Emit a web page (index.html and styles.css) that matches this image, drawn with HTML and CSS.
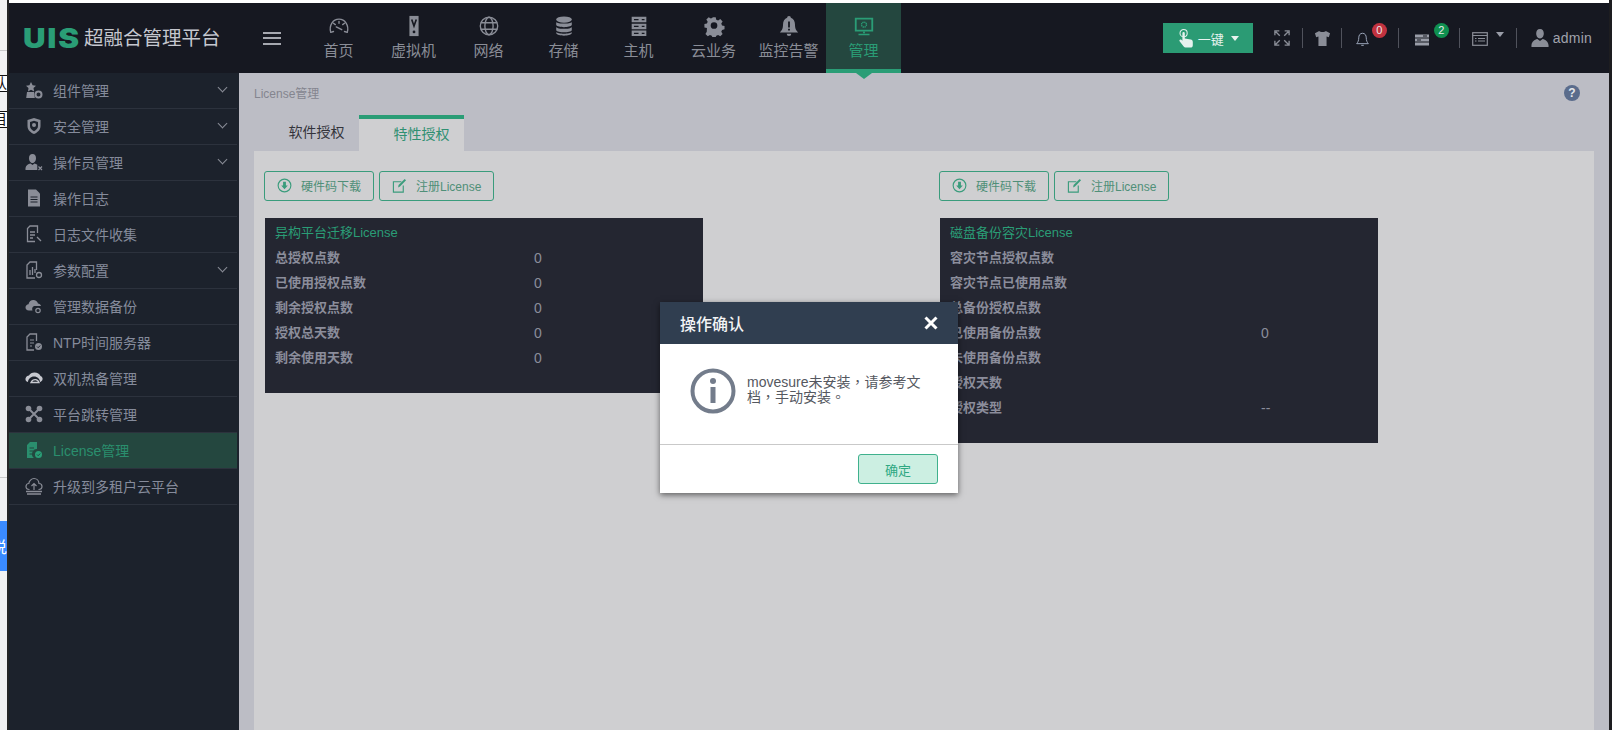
FILE: index.html
```html
<!DOCTYPE html>
<html lang="zh-CN">
<head>
<meta charset="utf-8">
<title>License管理</title>
<link rel="stylesheet" href="styles.css">
</head>
<body>
<div class="screen">
  <div class="strip">
    <div class="frag-line frag-line-a"></div>
    <div class="frag frag-a"><span>认</span></div>
    <div class="frag frag-b"><span>目</span></div>
    <div class="frag-line frag-line-b"></div>
    <div class="frag-blue"><span>说</span></div>
  </div>
  <div class="frame">
    <header class="topbar">
      <div class="brand"><span class="brand-mark">UIS</span><span class="brand-name">超融合管理平台</span></div>
      <button class="burger" aria-label="menu"><i></i><i></i><i></i></button>
      <nav class="nav">
        <a class="nav-item"><svg class="nav-ico" viewBox="0 0 24 24" fill="none" stroke="currentColor" stroke-width="1.5"><path d="M3 19C.8 11 5.5 4.5 12 4.5S23.2 11 21 19"/><path d="M3 19l3-1M21 19l-3-1M6 9l2 1.500M18 9l-2 1.500M12 7v2M9 13l6 3" stroke-linecap="round"/></svg><span>首页</span></a>
        <a class="nav-item"><svg class="nav-ico" viewBox="0 0 24 24"><path fill="currentColor" d="M7 1h10v22H7z"/><path fill="none" stroke="#161821" stroke-width="1.800" d="M9.500 5l2.500 7 2.500-7"/><circle cx="12" cy="18.500" r="1.500" fill="#161821"/></svg><span>虚拟机</span></a>
        <a class="nav-item"><svg class="nav-ico" viewBox="0 0 24 24" fill="none" stroke="currentColor" stroke-width="1.500"><circle cx="12" cy="12" r="9.500"/><ellipse cx="12" cy="12" rx="4.500" ry="9.500"/><path d="M3 8.500h18M3 15.500h18"/></svg><span>网络</span></a>
        <a class="nav-item"><svg class="nav-ico" viewBox="0 0 24 24" fill="currentColor"><ellipse cx="12" cy="5" rx="8.500" ry="3.500"/><path d="M3.500 7.500C5 10 19 10 20.500 7.500V11C19 14 5 14 3.500 11zM3.500 13C5 15.800 19 15.800 20.500 13v3.500C19 19.500 5 19.500 3.500 16.500zM3.500 18.500C5 21 19 21 20.500 18.500V20C19 23.500 5 23.500 3.500 20z"/></svg><span>存储</span></a>
        <a class="nav-item"><svg class="nav-ico" viewBox="0 0 24 24"><path fill="currentColor" d="M4 2h16v6H4zM4 9.500h16v6H4zM4 17h16v6H4z"/><path stroke="#161821" stroke-width="1.400" d="M6.500 5h5M6.500 12.500h5M6.500 20h5M15 5h3M15 12.500h3M15 20h3"/></svg><span>主机</span></a>
        <a class="nav-item"><svg class="nav-ico" viewBox="0 0 24 24"><path fill="currentColor" fill-rule="evenodd" d="M10 2h4l.7 3 2.200.9 2.600-1.600 2.800 2.800-1.600 2.600.9 2.200 3 .7v4l-3 .7-.9 2.200 1.600 2.600-2.800 2.800-2.600-1.600-2.200.9-.7 1.800h-4l-.7-1.800-2.200-.9-2.600 1.600-2.800-2.800 1.600-2.600L3.500 15l-3-.7v-4l3-.7.9-2.200-1.600-2.600 2.800-2.800 2.600 1.600 2.200-.9zM12 8a4 4 0 1 0 0 8 4 4 0 0 0 0-8z" transform="translate(1.100 .5) scale(.91)"/></svg><span>云业务</span></a>
        <a class="nav-item"><svg class="nav-ico" viewBox="0 0 24 24"><path fill="currentColor" d="M12 1c1.500 0 2 1 2 2 3 1 4.500 4 4.500 7 0 5 1.500 7 3.500 9H2c2-2 3.500-4 3.500-9 0-3 1.500-6 4.500-7 0-1 .5-2 2-2zM9.500 20.500h5a2.500 2.500 0 0 1-5 0z"/><path fill="#161821" d="M11 7h2v6.500h-2zM11 15h2v2h-2z"/></svg><span>监控告警</span></a>
        <a class="nav-item nav-active"><svg class="nav-ico" viewBox="0 0 24 24"><path fill="currentColor" fill-rule="evenodd" d="M2 3h20v15H2zM4 5v11h16V5z"/><path fill="currentColor" d="M11 18h2v2h-2zM6 20.500h12V22H6z"/><circle cx="12" cy="10.500" r="2.700" fill="none" stroke="currentColor" stroke-width="1.500" stroke-dasharray="1.500 .6"/></svg><span>管理</span></a>
      </nav>
      <div class="tools">
        <button class="one-key">
          <svg class="hand" viewBox="0 0 20 24"><circle cx="7" cy="6" r="4.500" fill="none" stroke="#e6f2ee" stroke-width="1.300"/><path fill="#e6f2ee" d="M5.500 6a1.500 1.500 0 0 1 3 0v6.500l7.500 1.500c1.500.3 2.500 1.200 2.500 3V21c0 1.500-1 3-3 3H9.500c-1 0-1.800-.5-2.400-1.300L2 16c-1-1.500.8-3 2.200-1.800L5.500 15.500z"/></svg>
          <span>一键</span><i class="caret caret-light"></i>
        </button>
        <span class="tool tool-full"><svg class="ico-full" viewBox="0 0 18 18" fill="none" stroke="#8a8d97" stroke-width="1.500"><path d="M1 6V1h5M12 1h5v5M1 12v5h5M12 17h5v-5M2 2l4.500 4.500M16 2l-4.500 4.500M2 16l4.500-4.500M16 16l-4.500-4.500"/></svg></span>
        <span class="tool tool-shirt"><svg class="ico-shirt" viewBox="0 0 18 18"><path fill="#8a8d97" d="M5.500 1L1 3.500l1.300 4.200 2.400-.7V17h8.600V7l2.400.7L17 3.500 12.500 1C11.500 2.500 6.500 2.500 5.500 1z"/></svg></span>
        <span class="tool tool-bell"><svg class="ico-bell" viewBox="0 0 16 18" fill="none" stroke="#9aa4b8" stroke-width="1.200"><path d="M8 1.500c-3 0-4.500 2.500-4.500 5.500 0 3-1 5.500-2.500 7h14c-1.500-1.500-2.500-4-2.500-7 0-3-1.500-5.500-4.500-5.500z"/><path d="M6.500 16h3"/></svg><b class="badge badge-red">0</b></span>
        <span class="tool tool-srv"><svg class="ico-srv" viewBox="0 0 16 12"><path fill="#9a9da8" d="M1 .5h14v3H1zM1 4.500h14v3H1zM1 8.500h14v3H1z"/><path stroke="#161821" d="M9 2h4M3 6h4"/></svg><b class="badge badge-green">2</b></span>
        <span class="tool tool-panel"><svg class="ico-panel" viewBox="0 0 16 14" fill="none" stroke="#8a8d97" stroke-width="1.200"><rect x=".7" y=".7" width="14.600" height="12.600"/><path d="M.7 3.500h14.600M3 6.500h1.500M6 6.500h7M3 9h1.500M6 9h7"/></svg><i class="caret caret-grey"></i></span>
        <span class="tool tool-user"><svg class="ico-user" viewBox="0 0 18 20"><path fill="#8a8d97" d="M9 0c2.800 0 4 2.200 4 4.800S11.500 10 9 10 5 7.400 5 4.800 6.200 0 9 0zM6.200 10.500L9 12.500l2.800-2c3 .6 5.700 2.500 6.200 6.500V19H0v-2c.5-4 3.200-5.900 6.200-6.500z"/></svg><span class="user-name">admin</span></span>
      </div>
    </header>
    <div class="main">
      <aside class="side">
        <a class="side-row"><svg class="side-ico" viewBox="0 0 18 18"><path fill="#8a8d97" d="M6 1l1.600 3.300 3.400.5L8.500 7l.6 3.500L6 8.800 3 10.500 3.500 7 1 4.800l3.400-.5zM2 11h7l.8 6H1.200z"/><circle cx="13.500" cy="13.500" r="3" fill="none" stroke="#8a8d97" stroke-width="2"/></svg><span class="side-text">组件管理</span><i class="chev"></i></a>
        <a class="side-row"><svg class="side-ico" viewBox="0 0 18 18"><path fill="#8a8d97" fill-rule="evenodd" d="M9 1l6.500 2v6c0 4-3 6.500-6.500 8-3.500-1.500-6.500-4-6.500-8V3zM5 5v4c0 2.500 1.800 4 4 5.200 2.200-1.200 4-2.700 4-5.200V5L9 3.800z"/><circle cx="9" cy="8" r="2" fill="#8a8d97"/></svg><span class="side-text">安全管理</span><i class="chev"></i></a>
        <a class="side-row"><svg class="side-ico" viewBox="0 0 18 18"><path fill="#8a8d97" d="M7.500 1c2.500 0 3.500 2 3.500 4.200S9.700 10 7.500 10 4 7.400 4 5.200 5 1 7.500 1zM.5 17v-2c.4-2.600 2.500-4 5-4.500l2 1.500 2-1.500c1 .2 2 .6 2.800 1.200V17z"/><path stroke="#8a8d97" stroke-width="1.200" d="M13.500 13.500l3.500 3.500M17 13.500l-3.500 3.500"/></svg><span class="side-text">操作员管理</span><i class="chev"></i></a>
        <a class="side-row"><svg class="side-ico" viewBox="0 0 18 18"><path fill="#8a8d97" d="M3 .5h8l4 4v13H3z"/><path stroke="#1c222c" stroke-width="1.200" d="M5.500 8h7M5.500 10.500h7M5.500 13h7"/></svg><span class="side-text">操作日志</span></a>
        <a class="side-row"><svg class="side-ico" viewBox="0 0 18 18" fill="none" stroke="#8a8d97" stroke-width="1.300"><path d="M12.500 8V1H5L2.500 3.500V16.500H10"/><path d="M5 7h5M5 10h5M5 13h3M12 12l4 4" /></svg><span class="side-text">日志文件收集</span></a>
        <a class="side-row"><svg class="side-ico" viewBox="0 0 18 18" fill="none" stroke="#8a8d97" stroke-width="1.300"><path d="M11.500 9V1H5L2 4v13h8"/><path d="M5 14V9M7.500 14V6M10 12V8"/><circle cx="14" cy="14" r="2.500"/></svg><span class="side-text">参数配置</span><i class="chev"></i></a>
        <a class="side-row"><svg class="side-ico" viewBox="0 0 18 18"><path fill="#8a8d97" d="M4 13.500c-2.500 0-3.500-1.500-3.500-3.200S2 7.300 3.500 7.200C4 4.500 6 3 8.300 3c2.400 0 4 1.500 4.700 3.500 1.300.2 2.700 1 3 2.500H10c-2 0-3.500 2-2.500 4.500z"/><circle cx="13" cy="13.500" r="2.200" fill="none" stroke="#8a8d97" stroke-width="1.200"/></svg><span class="side-text">管理数据备份</span></a>
        <a class="side-row"><svg class="side-ico" viewBox="0 0 18 18"><path fill="none" stroke="#8a8d97" stroke-width="1.300" d="M11.500 8V1H5L2 4v13h7"/><path stroke="#8a8d97" stroke-width="1.200" d="M5 7h4M5 10h4M5 13h2"/><circle cx="13.500" cy="13.500" r="3.500" fill="#8a8d97"/><path fill="none" stroke="#1c222c" stroke-width="1" d="M12 13.500l1.200 1.200 2-2.200"/></svg><span class="side-text">NTP时间服务器</span></a>
        <a class="side-row"><svg class="side-ico" viewBox="0 0 18 18"><path fill="#c7c9d0" d="M3 13c-2-.5-2.800-2-2.500-3.500C1 7.500 2.500 6.500 4 6.500 5 4.500 7 3.500 9.500 3.500c3 0 5 1.500 6 3.500 1.500.5 2.500 2 2 3.500-.3 1.300-1.300 2.200-2.500 2.500 0-3-2.500-5.500-6-5.500-3.300 0-6 2.500-6 5.500z"/><path fill="none" stroke="#c7c9d0" stroke-width="1.300" d="M6 13.500h8C13 10 8 9.500 6 13.500z"/></svg><span class="side-text">双机热备管理</span></a>
        <a class="side-row"><svg class="side-ico" viewBox="0 0 18 18"><path stroke="#8a8d97" stroke-width="2" d="M3.500 3.500l11 11M14.500 3.500l-11 11"/><g fill="#8a8d97"><circle cx="3.500" cy="3.500" r="2.800"/><circle cx="14.500" cy="3.500" r="2.800"/><circle cx="3.500" cy="14.500" r="2.800"/><circle cx="14.500" cy="14.500" r="2.800"/></g></svg><span class="side-text">平台跳转管理</span></a>
        <a class="side-row side-active"><svg class="side-ico" viewBox="0 0 18 18"><path fill="#2a8f6e" d="M5 1h7v7a5 5 0 0 0-3 9H2V4z"/><path stroke="#24473f" stroke-width="1.200" d="M4.500 7H9M4.500 10H8M4.500 13H7"/><circle cx="13.500" cy="13.500" r="3.500" fill="#2a9d76"/><path fill="none" stroke="#24473f" stroke-width="1" d="M12 13.500l1.200 1.200 2-2.200"/></svg><span class="side-text">License管理</span></a>
        <a class="side-row"><svg class="side-ico" viewBox="0 0 18 18" fill="none" stroke="#8a8d97" stroke-width="1.200"><path d="M4.500 12.500C2 12.500 1 11 1 9.500s1.200-3 2.800-3C4 4 6.500 1.500 9 1.500c2.700 0 4.800 2.300 5 5 1.600 0 3 1.400 3 3s-1.200 3-3.500 3"/><path d="M9 13V6.500M6.500 9L9 6.500 11.500 9"/><path d="M1 14.500h16M2 17h14" stroke-width="1.500"/></svg><span class="side-text">升级到多租户云平台</span></a>
      </aside>
      <main class="content">
        <div class="crumb-row">
          <span class="crumb">License管理</span>
          <span class="help">?</span>
        </div>
        <div class="tabs">
          <span class="tab">软件授权</span>
          <span class="tab tab-on">特性授权</span>
        </div>
        <section class="panel">
          <div class="col">
            <div class="btns">
              <button class="btn btn-dl"><svg class="btn-ico" viewBox="0 0 16 16"><circle cx="8" cy="8" r="6.800" fill="none" stroke="#3a9c7c" stroke-width="1.200"/><path fill="#3a9c7c" d="M6.500 4h3v4h2L8 12 4.500 8h2z"/></svg><span>硬件码下载</span></button>
              <button class="btn btn-reg"><svg class="btn-ico" viewBox="0 0 16 16" fill="none" stroke="#3a9c7c" stroke-width="1.200"><path d="M10 4H1.500v11H12V8"/><path d="M6.500 10l.5-2.500L13.500 1 15 2.500 8.500 9z" fill="#3a9c7c" stroke="none"/></svg><span>注册License</span></button>
            </div>
            <div class="card card-short">
              <h3 class="card-title">异构平台迁移License</h3>
              <dl class="stat"><dt>总授权点数</dt><dd>0</dd></dl>
              <dl class="stat"><dt>已使用授权点数</dt><dd>0</dd></dl>
              <dl class="stat"><dt>剩余授权点数</dt><dd>0</dd></dl>
              <dl class="stat"><dt>授权总天数</dt><dd>0</dd></dl>
              <dl class="stat"><dt>剩余使用天数</dt><dd>0</dd></dl>
            </div>
          </div>
          <div class="col">
            <div class="btns">
              <button class="btn btn-dl"><svg class="btn-ico" viewBox="0 0 16 16"><circle cx="8" cy="8" r="6.800" fill="none" stroke="#3a9c7c" stroke-width="1.200"/><path fill="#3a9c7c" d="M6.500 4h3v4h2L8 12 4.500 8h2z"/></svg><span>硬件码下载</span></button>
              <button class="btn btn-reg"><svg class="btn-ico" viewBox="0 0 16 16" fill="none" stroke="#3a9c7c" stroke-width="1.200"><path d="M10 4H1.500v11H12V8"/><path d="M6.500 10l.5-2.500L13.500 1 15 2.500 8.500 9z" fill="#3a9c7c" stroke="none"/></svg><span>注册License</span></button>
            </div>
            <div class="card card-tall">
              <h3 class="card-title">磁盘备份容灾License</h3>
              <dl class="stat"><dt>容灾节点授权点数</dt><dd></dd></dl>
              <dl class="stat"><dt>容灾节点已使用点数</dt><dd></dd></dl>
              <dl class="stat"><dt>总备份授权点数</dt><dd></dd></dl>
              <dl class="stat"><dt>已使用备份点数</dt><dd>0</dd></dl>
              <dl class="stat"><dt>未使用备份点数</dt><dd></dd></dl>
              <dl class="stat"><dt>授权天数</dt><dd></dd></dl>
              <dl class="stat"><dt>授权类型</dt><dd>--</dd></dl>
            </div>
          </div>
        </section>
      </main>
    </div>
  </div>
  <div class="modal">
    <div class="modal-head"><span>操作确认</span><svg class="modal-x" viewBox="0 0 14 14"><path stroke="#fff" stroke-width="3" d="M1.500 1.500l11 11M12.500 1.500l-11 11"/></svg></div>
    <div class="modal-body">
      <svg class="info" viewBox="0 0 46 46"><circle cx="23" cy="23" r="20.500" fill="none" stroke="#737c8b" stroke-width="4"/><circle cx="23" cy="13" r="3" fill="#737c8b"/><rect x="20.500" y="19" width="5" height="16" fill="#737c8b"/></svg>
      <p class="modal-msg" lang="zh-TW">movesure未安装，请参考文档，手动安装。</p>
    </div>
    <div class="modal-foot"><button class="ok">确定</button></div>
  </div>
</div>
</body>
</html>
```

FILE: styles.css
```css
* { box-sizing: border-box; }
html, body { margin: 0; padding: 0; }
body {
  font-family: "Liberation Sans", "Noto Sans CJK SC", sans-serif;
  background: #f2f2f2;
}
.screen {
  position: relative;
  display: flex;
  width: 1612px;
  height: 730px;
  overflow: hidden;
}

/* page peeking out on the left */
.strip {
  width: 9px;
  flex: none;
  background: #f2f2f2;
  border-right: 2px solid #262626;
  overflow: hidden;
}
.frag-line { height: 1px; background: #c9c9c9; }
.frag-line-a { margin-top: 50px; }
.frag {
  display: flex;
  justify-content: flex-end;
  height: 17px;
  border-top: 1px solid #111;
  border-bottom: 1px solid #111;
  font-size: 14px;
  line-height: 15px;
  color: #111;
  background: #fff;
  overflow: hidden;
}
.frag span { flex: none; }
.frag-a { margin-top: 24px; }
.frag-b { margin-top: 19px; }
.frag-line-b { margin-top: 349px; }
.frag-blue {
  display: flex;
  justify-content: flex-end;
  align-items: center;
  height: 50px;
  margin-top: 43px;
  background: #3a8bff;
  color: #fff;
  font-size: 16px;
  overflow: hidden;
}
.frag-blue span { flex: none; }

.frame {
  flex: 1;
  min-width: 0;
  display: flex;
  flex-direction: column;
  background: #fff;
  padding-top: 3px;
  border-right: 3px solid #1d1d20;
}

/* top bar */
.topbar {
  flex: none;
  display: flex;
  align-items: stretch;
  height: 70px;
  background: #161821;
}
.brand {
  display: flex;
  align-items: center;
  width: 244px;
  padding-left: 14px;
  flex: none;
}
.brand-mark {
  font-family: Inter, sans-serif;
  font-weight: 900;
  font-size: 27px;
  letter-spacing: 1.5px;
  color: #2a9d76;
  line-height: 1;
  width: 61px;
  flex: none;
  transform: scaleX(1.16);
  transform-origin: left center;
}
.brand-name {
  font-size: 19.500px;
  line-height: 26px;
  color: #c5c7cf;
  white-space: nowrap;
}
.burger {
  flex: none;
  width: 48px;
  padding: 0 10px 0 10px;
  background: none;
  border: 0;
  display: flex;
  flex-direction: column;
  justify-content: center;
  gap: 3.500px;
}
.burger i { display: block; height: 2px; background: #a6a8b0; width: 18px; }
.nav { display: flex; flex: none; }
.nav-item {
  position: relative;
  width: 75px;
  display: flex;
  flex-direction: column;
  align-items: center;
  padding-top: 12px;
  color: #8a8d97;
  font-size: 15px;
  line-height: 20px;
}
.nav-ico { width: 22px; height: 22px; margin-bottom: 4px; }
.nav-active {
  background: #24473f;
  color: #2a9d76;
  border-bottom: 4px solid #2a9d76;
}
.nav-active::after {
  content: "";
  position: absolute;
  left: 50%;
  bottom: -10px;
  margin-left: -8px;
  border-left: 8px solid transparent;
  border-right: 8px solid transparent;
  border-top: 6px solid #2a9d76;
}
.tools {
  margin-left: auto;
  display: flex;
  align-items: center;
  padding-right: 17px;
}
.one-key {
  display: flex;
  align-items: center;
  width: 90px;
  height: 30px;
  margin-right: 21px;
  padding: 0 0 0 15px;
  background: #2b9b74;
  border: 0;
  color: #e8f3ef;
  font-family: inherit;
  font-size: 13px;
}
.hand { width: 16px; height: 20px; margin-right: 4px; flex: none; }
.caret { display: block; width: 0; height: 0; border-left: 4px solid transparent; border-right: 4px solid transparent; }
.caret-light { border-top: 5px solid #e8f3ef; margin-left: 7px; }
.caret-grey { border-top: 5px solid #9a9da8; margin-left: 8px; margin-top: -8px; }
.tool {
  position: relative;
  display: flex;
  align-items: center;
  height: 20px;
  padding: 0 11px 0 0;
  margin-right: 11px;
  border-right: 1px solid #50525c;
}
.tool-full { padding-right: 12px; }
.tool-shirt { padding-right: 10px; margin-right: 13px; }
.tool-panel { padding-right: 12px; margin-right: 15px; }
.tool-user { border-right: 0; margin: 0; padding: 0; }
.tool-bell { padding-right: 28px; margin-right: 15px; }
.tool-srv { padding-right: 29px; margin-right: 12px; }
.ico-full { width: 16px; height: 16px; }
.ico-shirt { width: 17px; height: 17px; }
.ico-bell { width: 15px; height: 15px; margin-top: 2px; }
.ico-srv { width: 16px; height: 12px; margin-top: 4px; }
.ico-panel { width: 16px; height: 14px; margin-top: 2px; }
.ico-user { width: 18px; height: 19px; margin-right: 4px; margin-left: -1px; }
.user-name { font-size: 14px; color: #a0a2ac; letter-spacing: .2px; }
.badge {
  position: absolute;
  top: -5px;
  width: 15px;
  height: 15px;
  border-radius: 50%;
  color: #e9e9ec;
  font-size: 11px;
  font-weight: 400;
  line-height: 15px;
  text-align: center;
}
.tool-bell .badge { left: 17px; background: #c2323f; }
.tool-srv .badge { left: 20px; background: #0f9050; }

/* main area */
.main { flex: 1; min-height: 0; display: flex; }
.side {
  flex: none;
  width: 230px;
  background: #1c222c;
}
.side-row {
  position: relative;
  display: flex;
  align-items: center;
  height: 36px;
  padding: 0 0 2px 16px;
  border-bottom: 1px solid #2c323d;
  margin-right: 2px;
  color: #858b9b;
  font-size: 14px;
}
.side-ico { width: 18px; height: 18px; flex: none; margin-right: 10px; }
.side-text { white-space: nowrap; }
.side-active { background: #24473f; color: #2a8f6e; }
.chev {
  position: absolute;
  right: 11px;
  top: 11px;
  width: 7px;
  height: 7px;
  border-right: 1.500px solid #8a8d97;
  border-bottom: 1.500px solid #8a8d97;
  transform: rotate(45deg);
}
.content {
  flex: 1;
  min-width: 0;
  display: flex;
  flex-direction: column;
  background: #bcbdc5;
  padding: 0 15px;
}
.crumb-row {
  flex: none;
  display: flex;
  justify-content: space-between;
  align-items: center;
  height: 39px;
}
.crumb { font-size: 12px; color: #84858f; }
.help {
  width: 16px;
  height: 16px;
  margin-right: 14px;
  border-radius: 50%;
  background: #5a6c8c;
  color: #e4e6ea;
  font-size: 12px;
  font-weight: 700;
  line-height: 16px;
  text-align: center;
}
.tabs { flex: none; display: flex; height: 39px; }
.tab {
  width: 105px;
  padding: 10px 0 0 20px;
  text-align: center;
  font-size: 14px;
  line-height: 20px;
  color: #33343b;
}
.tab-on {
  margin-top: 3px;
  background: #cfcfd1;
  border-top: 4px solid #2a9d76;
  color: #2f9072;
  padding-top: 5px;
}
.panel {
  flex: 1;
  min-height: 0;
  display: grid;
  grid-template-columns: 675px 1fr;
  padding: 20px 10px 0;
  background: #cfcfd1;
}
.btns { display: flex; gap: 5px; }
.btn {
  display: flex;
  align-items: center;
  height: 30px;
  padding: 0 0 2px 12px;
  background: transparent;
  border: 1px solid #3a9c7c;
  border-radius: 3px;
  color: #4f8f78;
  font-family: inherit;
  font-size: 12px;
  white-space: nowrap;
}
.btn-dl { width: 110px; }
.btn-reg { width: 115px; }
.btn-ico { width: 15px; height: 15px; margin-right: 9px; flex: none; }
.card {
  width: 438px;
  margin: 17px 0 0 1px;
  padding: 7px 10px 0;
  background: #242631;
}
.card-short { height: 175px; }
.card-tall { height: 225px; }
.card-title {
  margin: 0;
  font-size: 13px;
  font-weight: 400;
  line-height: 16px;
  color: #2a9d76;
}
.stat {
  display: flex;
  margin: 9px 0 0;
  height: 16px;
  line-height: 16px;
  color: #8b8d9b;
  font-size: 13px;
}
.stat dt { width: 259px; font-weight: 700; white-space: nowrap; flex: none; }
.card-tall .stat dt { width: 311px; }
.stat dd { margin: 0; font-size: 14px; }

/* dialog */
.modal {
  position: absolute;
  left: 660px;
  top: 302px;
  width: 298px;
  height: 191px;
  display: flex;
  flex-direction: column;
  background: #fff;
  box-shadow: 0 2px 6px rgba(0, 0, 0, .55);
}
.modal-head {
  flex: none;
  display: flex;
  align-items: center;
  justify-content: space-between;
  height: 42px;
  padding: 0 20px;
  background: #303e50;
  color: #f2f3f5;
  font-size: 16px;
  font-weight: 500;
}
.modal-x { width: 14px; height: 14px; }
.modal-body {
  flex: 1;
  display: flex;
  align-items: flex-start;
  padding: 24px 20px 0 30px;
  border-bottom: 1px solid #c9c9c9;
}
.info { width: 46px; height: 46px; flex: none; margin-right: 11px; }
.modal-msg {
  width: 176px;
  margin: 7px 0 0;
  font-family: "Liberation Sans", "Noto Sans CJK TC", sans-serif;
  font-size: 14px;
  line-height: 15px;
  color: #55585f;
}
.modal-foot {
  flex: none;
  display: flex;
  justify-content: flex-end;
  align-items: center;
  height: 48px;
  padding-right: 20px;
}
.ok {
  width: 80px;
  height: 30px;
  background: #ccefe2;
  border: 1px solid #3fb18d;
  border-radius: 3px;
  color: #2fa882;
  font-family: inherit;
  font-size: 13px;
}
```
